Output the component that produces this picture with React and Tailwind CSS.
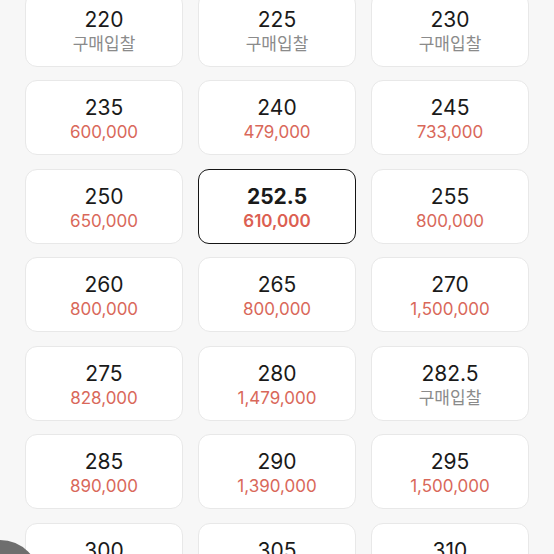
const rows = [
  [["220", null], ["225", null], ["230", null]],
  [["235", "600,000"], ["240", "479,000"], ["245", "733,000"]],
  [["250", "650,000"], ["252.5", "610,000", true], ["255", "800,000"]],
  [["260", "800,000"], ["265", "800,000"], ["270", "1,500,000"]],
  [["275", "828,000"], ["280", "1,479,000"], ["282.5", null]],
  [["285", "890,000"], ["290", "1,390,000"], ["295", "1,500,000"]],
  [["300", null], ["305", null], ["310", null]],
];

const SizeCard = ({ size, price, selected }) => (
  <div
    className={
      selected
        ? "h-[75px] rounded-[11px] border-[1.5px] border-[#151515] bg-white flex flex-col items-center justify-center pt-[5px]"
        : "h-[75px] rounded-[12px] border border-[#e8e8e8] bg-white flex flex-col items-center justify-center pt-[5px]"
    }
  >
    <span
      className={
        selected
          ? "text-[21px] leading-[25px] font-bold text-[#1a1a1a]"
          : "text-[21px] leading-[25px] text-[#1a1a1a]"
      }
    >
      {size}
    </span>
    {price ? (
      <span
        className={
          selected
            ? "text-[17px] leading-[25px] font-semibold text-[#dc5f52]"
            : "text-[17px] leading-[25px] text-[#d9685a]"
        }
      >
        {price}
      </span>
    ) : (
      <span className="text-[17px] leading-[25px] text-[#8b8b8b]">구매입찰</span>
    )}
  </div>
);

export default function App() {
  return (
    <div
      className="relative w-[554px] h-[554px] overflow-hidden bg-[#f7f7f7]"
      style={{ fontFamily: '"Inter", "Noto Sans CJK KR", sans-serif' }}
    >
      <div className="-mt-[8.5px] px-[25px] grid grid-cols-3 gap-x-[15px] gap-y-[13.5px]">
        {rows.flat().map(([size, price, selected]) => (
          <SizeCard key={size} size={size} price={price} selected={selected} />
        ))}
      </div>
      <div className="absolute -left-[40px] top-[540px] w-[80px] h-[80px] rounded-full bg-[#6e6e6e]" />
    </div>
  );
}
